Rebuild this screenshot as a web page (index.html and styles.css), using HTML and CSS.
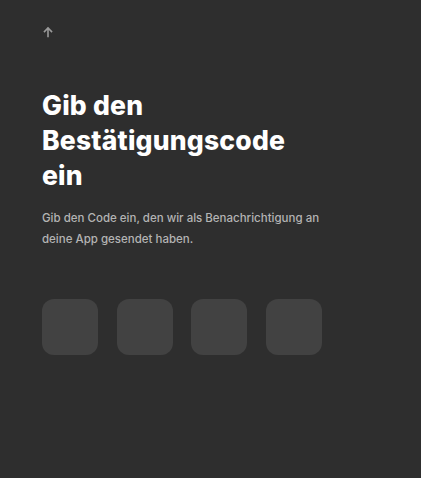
FILE: index.html
```html
<!DOCTYPE html>
<html lang="de">
<head>
<meta charset="utf-8">
<link rel="stylesheet" href="styles.css">
</head>
<body>
<main class="page">
  <button class="back" aria-label="Zurück">
    <svg width="12" height="12" viewBox="0 0 12 12"><path d="M6 10.5V2M2.5 5.5L6 2l3.5 3.5" fill="none" stroke="#9a9a9a" stroke-width="1.6" stroke-linecap="square"/></svg>
  </button>
  <h1 class="title">Gib den<br>Bestätigungscode<br>ein</h1>
  <p class="desc">Gib den Code ein, den wir als Benachrichtigung an deine App gesendet haben.</p>
  <div class="code">
    <div class="cell"></div>
    <div class="cell"></div>
    <div class="cell"></div>
    <div class="cell"></div>
  </div>
</main>
</body>
</html>
```
FILE: styles.css
```css
html, body {
  margin: 0;
  height: 100%;
  background: #2e2e2e;
}
.page {
  padding: 26px 42px 0;
  font-family: Inter, "Noto Sans", sans-serif;
}
.back {
  display: block;
  background: none;
  border: 0;
  padding: 0;
  width: 12px;
  height: 12px;
  cursor: pointer;
}
.title {
  margin: 50px 0 0;
  color: #fff;
  font-size: 26.5px;
  line-height: 35px;
  font-weight: 800;
  letter-spacing: 0.2px;
}
.desc {
  margin: 15px 0 0;
  width: 290px;
  color: #b4b4b4;
  font-size: 11.5px;
  font-weight: 500;
  line-height: 21px;
}
.code {
  display: flex;
  gap: 18.6px;
  margin-top: 49px;
}
.cell {
  width: 56px;
  height: 56px;
  border-radius: 12px;
  background: #424242;
}
```
